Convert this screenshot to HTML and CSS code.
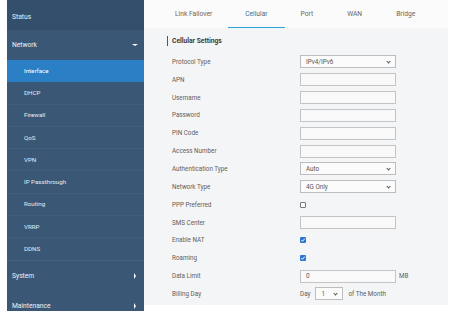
FILE: index.html
```html
<!DOCTYPE html>
<html>
<head>
<meta charset="utf-8">
<link rel="stylesheet" href="styles.css">
</head>
<body>
<div class="page">
  <nav class="sidebar">
    <div class="top status">Status</div>
    <div class="top network">Network <span class="caret-down"></span></div>
    <div class="sub active">Interface</div>
    <div class="sub">DHCP</div>
    <div class="sub">Firewall</div>
    <div class="sub">QoS</div>
    <div class="sub">VPN</div>
    <div class="sub">IP Passthrough</div>
    <div class="sub">Routing</div>
    <div class="sub">VRRP</div>
    <div class="sub last">DDNS</div>
    <div class="top">System <span class="caret-right"></span></div>
    <div class="top">Maintenance <span class="caret-right"></span></div>
  </nav>
  <main class="main">
    <div class="tabs">
      <span class="tab">Link Failover</span>
      <span class="tab active">Cellular</span>
      <span class="tab">Port</span>
      <span class="tab">WAN</span>
      <span class="tab">Bridge</span>
    </div>
    <div class="content">
      <h2 class="heading">Cellular Settings</h2>
      <div class="form">
        <label>Protocol Type</label><div class="field"><span class="select">IPv4/IPv6<i class="chev"></i></span></div>
        <label>APN</label><div class="field"><span class="input"></span></div>
        <label>Username</label><div class="field"><span class="input"></span></div>
        <label>Password</label><div class="field"><span class="input"></span></div>
        <label>PIN Code</label><div class="field"><span class="input"></span></div>
        <label>Access Number</label><div class="field"><span class="input"></span></div>
        <label>Authentication Type</label><div class="field"><span class="select">Auto<i class="chev"></i></span></div>
        <label>Network Type</label><div class="field"><span class="select">4G Only<i class="chev"></i></span></div>
        <label>PPP Preferred</label><div class="field"><span class="check"></span></div>
        <label>SMS Center</label><div class="field"><span class="input"></span></div>
        <label>Enable NAT</label><div class="field"><span class="check on"><svg viewBox="0 0 6 6" width="6" height="6"><path d="M1.3 3.1 L2.5 4.3 L4.8 1.6" fill="none" stroke="#fff" stroke-width="1"/></svg></span></div>
        <label>Roaming</label><div class="field"><span class="check on"><svg viewBox="0 0 6 6" width="6" height="6"><path d="M1.3 3.1 L2.5 4.3 L4.8 1.6" fill="none" stroke="#fff" stroke-width="1"/></svg></span></div>
        <label>Data Limit</label><div class="field"><span class="input text">0</span><span class="unit">MB</span></div>
        <label>Billing Day</label><div class="field"><span class="unit first">Day</span><span class="select small">1<i class="chev"></i></span><span class="unit">of The Month</span></div>
      </div>
    </div>
  </main>
</div>
</body>
</html>
```

FILE: styles.css
```css
html, body {
  margin: 0;
  padding: 0;
}
body {
  width: 459px;
  height: 311px;
  overflow: hidden;
  background: #ffffff;
  font-family: Roboto, "Liberation Sans", Arial, sans-serif;
}
.page {
  display: flex;
  padding-left: 7px;
  height: 311px;
  align-items: flex-start;
}
.sidebar {
  width: 137px;
  height: 311px;
  overflow: hidden;
  background: #3a5776;
  display: flex;
  flex-direction: column;
  flex-shrink: 0;
}
.top {
  height: 30px;
  flex-shrink: 0;
  display: flex;
  align-items: center;
  justify-content: space-between;
  padding: 0 6px 0 5px;
  font-size: 6.7px;
  color: #eef2f6;
  box-sizing: border-box;
}
.status {
  background: #344f6c;
  padding-top: 5px;
  border-bottom: 1px solid #324b67;
}
.network {
  height: 30px;
  padding-top: 0;
}
.sub {
  height: 22.3px;
  flex-shrink: 0;
  display: flex;
  align-items: center;
  padding-left: 17px;
  font-size: 6.2px;
  color: #e6ecf2;
  box-sizing: border-box;
  border-bottom: 1px solid rgba(255, 255, 255, 0.04);
}
.sub.active {
  background: #2b80c5;
  color: #ffffff;
  border-bottom-color: #2b80c5;
}
.sub.last {
  border-bottom: 1px solid rgba(255, 255, 255, 0.07);
}
.caret-down {
  width: 0;
  height: 0;
  border-left: 3px solid transparent;
  border-right: 3px solid transparent;
  border-top: 2.5px solid #ffffff;
}
.caret-right {
  width: 0;
  height: 0;
  margin-right: 2px;
  border-top: 3px solid transparent;
  border-bottom: 3px solid transparent;
  border-left: 2.5px solid #ffffff;
}
.main {
  width: 304px;
  height: 305px;
  background: #f4f5f6;
  flex-shrink: 0;
}
.tabs {
  height: 28px;
  background: #fbfbfb;
  display: flex;
  align-items: stretch;
  padding-left: 14px;
  box-sizing: border-box;
}
.tab {
  display: flex;
  align-items: center;
  padding: 0 17px;
  font-size: 6.7px;
  color: #666666;
  box-sizing: border-box;
  border-bottom: 1px solid transparent;
  padding-top: 1px;
}
.tab.active {
  color: #4a6b88;
  border-bottom: 1px solid #29a3d6;
  margin: 0 -1px;
}
.content {
  padding: 8px 0 0 23px;
}
.heading {
  margin: 0;
  font-size: 6.7px;
  font-weight: bold;
  color: #3a3a3a;
  line-height: 10px;
  padding-left: 4px;
  border-left: 1px solid #555555;
  height: 10px;
}
.form {
  margin-top: 7px;
  display: grid;
  grid-template-columns: 133px 150px;
  grid-auto-rows: 17.85px;
}
.form label {
  display: flex;
  align-items: center;
  padding-left: 5px;
  font-size: 6.3px;
  color: #606060;
}
.field {
  display: flex;
  align-items: center;
}
.input, .select {
  width: 96px;
  height: 13px;
  box-sizing: border-box;
  border: 1px solid #c4c4c4;
  background: #f9f9fa;
  font-size: 6.3px;
  color: #555555;
  display: flex;
  align-items: center;
  padding-left: 5px;
  position: relative;
}
.select {
  background: #fbfbfb;
  border-color: #bdbdbd;
}
.select.small {
  width: 28px;
  margin: 0 3px 0 4px;
  padding-left: 6px;
}
.chev {
  position: absolute;
  right: 5px;
  top: 4px;
  width: 2px;
  height: 2px;
  border-right: 1px solid #555555;
  border-bottom: 1px solid #555555;
  transform: rotate(45deg);
}
.check {
  width: 6px;
  height: 6px;
  box-sizing: border-box;
  border: 1px solid #777777;
  background: #ffffff;
  border-radius: 1px;
  display: flex;
}
.check.on {
  border: none;
  background: #2b77cf;
}
.check svg {
  display: block;
}
.unit {
  font-size: 6.3px;
  color: #606060;
  margin-left: 3px;
}
.unit.first {
  margin-left: 0;
}
```
